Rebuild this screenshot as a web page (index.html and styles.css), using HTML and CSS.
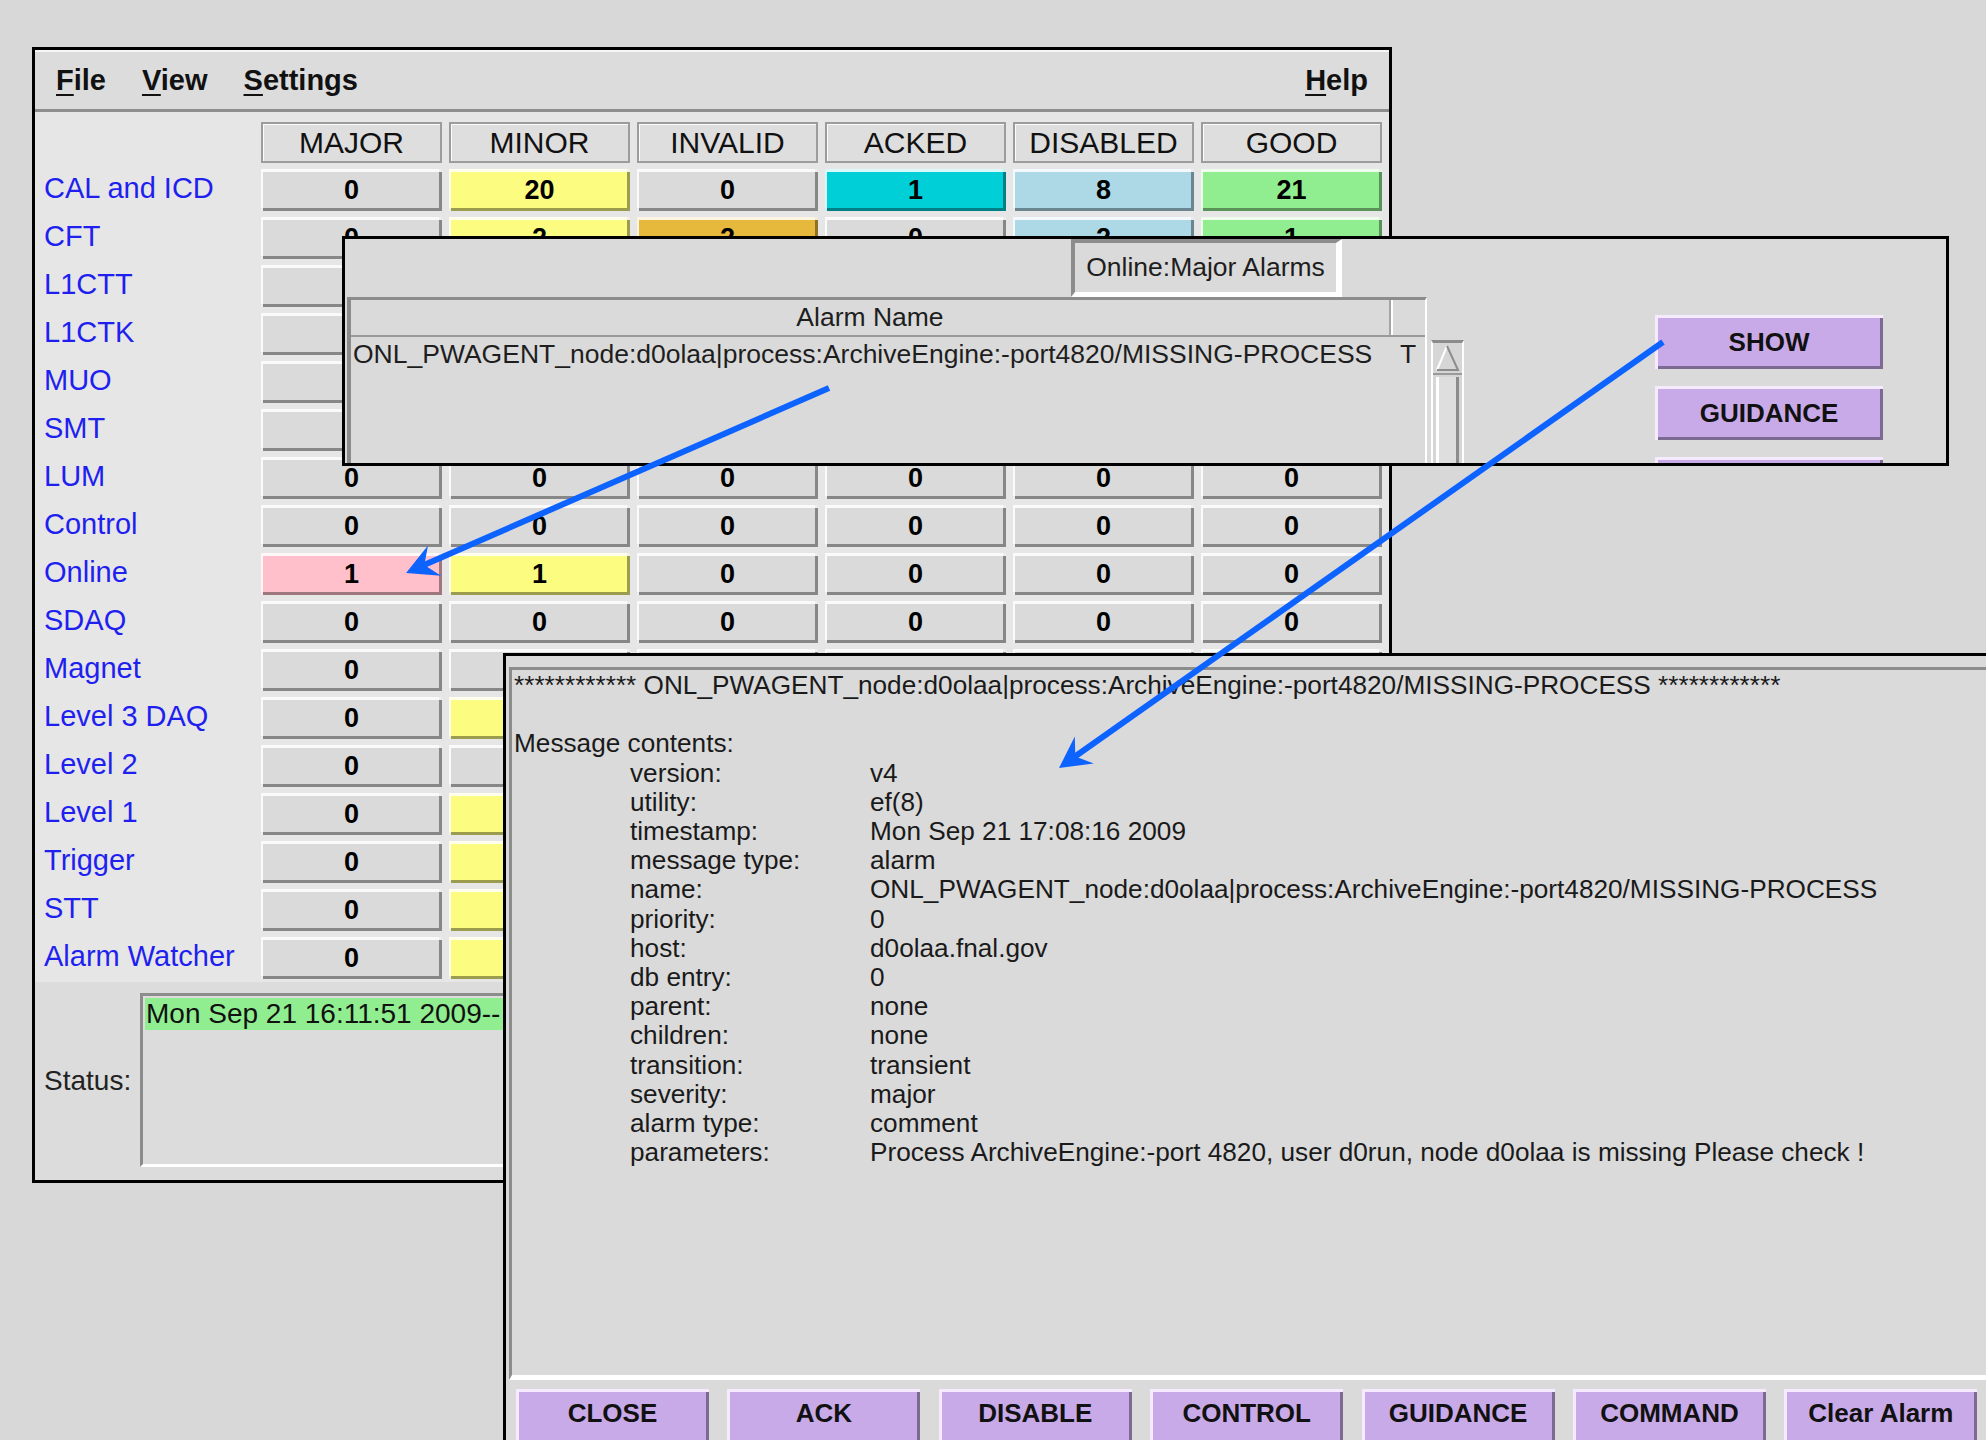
FILE: index.html
```html
<!DOCTYPE html>
<html lang="en">
<head>
<meta charset="utf-8">
<title>Alarm Display</title>
<link rel="stylesheet" href="styles.css">
</head>
<body>

<!-- Summary window -->
<div class="win win-main">
  <div class="menubar">
    <span class="menu"><u>F</u>ile</span>
    <span class="menu"><u>V</u>iew</span>
    <span class="menu"><u>S</u>ettings</span>
    <span class="menu menu-help"><u>H</u>elp</span>
  </div>

  <div class="grid">
    <div></div>
    <div class="hdr">MAJOR</div><div class="hdr">MINOR</div><div class="hdr">INVALID</div>
    <div class="hdr">ACKED</div><div class="hdr">DISABLED</div><div class="hdr">GOOD</div>

    <div class="lbl">CAL and ICD</div>
    <div class="cell">0</div><div class="cell c-yellow">20</div><div class="cell">0</div>
    <div class="cell c-cyan">1</div><div class="cell c-blue">8</div><div class="cell c-green">21</div>

    <div class="lbl">CFT</div>
    <div class="cell">0</div><div class="cell c-yellow">2</div><div class="cell c-orange">2</div>
    <div class="cell">0</div><div class="cell c-blue">2</div><div class="cell c-green">1</div>

    <div class="lbl">L1CTT</div>
    <div class="cell"></div><div class="cell"></div><div class="cell"></div>
    <div class="cell"></div><div class="cell"></div><div class="cell"></div>

    <div class="lbl">L1CTK</div>
    <div class="cell"></div><div class="cell"></div><div class="cell"></div>
    <div class="cell"></div><div class="cell"></div><div class="cell"></div>

    <div class="lbl">MUO</div>
    <div class="cell"></div><div class="cell"></div><div class="cell"></div>
    <div class="cell"></div><div class="cell"></div><div class="cell"></div>

    <div class="lbl">SMT</div>
    <div class="cell"></div><div class="cell"></div><div class="cell"></div>
    <div class="cell"></div><div class="cell"></div><div class="cell"></div>

    <div class="lbl">LUM</div>
    <div class="cell">0</div><div class="cell">0</div><div class="cell">0</div>
    <div class="cell">0</div><div class="cell">0</div><div class="cell">0</div>

    <div class="lbl">Control</div>
    <div class="cell">0</div><div class="cell">0</div><div class="cell">0</div>
    <div class="cell">0</div><div class="cell">0</div><div class="cell">0</div>

    <div class="lbl">Online</div>
    <div class="cell c-pink">1</div><div class="cell c-yellow">1</div><div class="cell">0</div>
    <div class="cell">0</div><div class="cell">0</div><div class="cell">0</div>

    <div class="lbl">SDAQ</div>
    <div class="cell">0</div><div class="cell">0</div><div class="cell">0</div>
    <div class="cell">0</div><div class="cell">0</div><div class="cell">0</div>

    <div class="lbl">Magnet</div>
    <div class="cell">0</div><div class="cell"></div><div class="cell"></div>
    <div class="cell"></div><div class="cell"></div><div class="cell"></div>

    <div class="lbl">Level 3 DAQ</div>
    <div class="cell">0</div><div class="cell c-yellow"></div><div class="cell"></div>
    <div class="cell"></div><div class="cell"></div><div class="cell"></div>

    <div class="lbl">Level 2</div>
    <div class="cell">0</div><div class="cell"></div><div class="cell"></div>
    <div class="cell"></div><div class="cell"></div><div class="cell"></div>

    <div class="lbl">Level 1</div>
    <div class="cell">0</div><div class="cell c-yellow"></div><div class="cell"></div>
    <div class="cell"></div><div class="cell"></div><div class="cell"></div>

    <div class="lbl">Trigger</div>
    <div class="cell">0</div><div class="cell c-yellow"></div><div class="cell"></div>
    <div class="cell"></div><div class="cell"></div><div class="cell"></div>

    <div class="lbl">STT</div>
    <div class="cell">0</div><div class="cell c-yellow"></div><div class="cell"></div>
    <div class="cell"></div><div class="cell"></div><div class="cell"></div>

    <div class="lbl">Alarm Watcher</div>
    <div class="cell">0</div><div class="cell c-yellow"></div><div class="cell"></div>
    <div class="cell"></div><div class="cell"></div><div class="cell"></div>
  </div>

  <div class="status">
    <span class="status-lbl">Status:</span>
    <div class="status-box">
      <div class="status-line">Mon Sep 21 16:11:51 2009--</div>
    </div>
  </div>
</div>

<!-- Alarm list window -->
<div class="win win-popup">
  <div class="pop-main">
    <div class="tab-row">
      <div class="tab">Online:Major Alarms</div>
    </div>
    <div class="table-row">
      <div class="alarm-table">
        <div class="thead">
          <div class="th-name">Alarm Name</div>
          <div class="th-t"></div>
        </div>
        <div class="trow">
          <div class="td-name">ONL_PWAGENT_node:d0olaa|process:ArchiveEngine:-port4820/MISSING-PROCESS</div>
          <div class="td-t">T</div>
        </div>
      </div>
      <div class="scrollbar">
        <svg class="sb-arrow" width="29" height="30" viewBox="0 0 29 30">
          <polyline points="4,27 14,3" fill="none" stroke="#ffffff" stroke-width="2"/>
          <polyline points="14,3 25,27 4,27" fill="none" stroke="#8c8c8c" stroke-width="2"/>
        </svg>
        <div class="sb-slider"></div>
      </div>
    </div>
  </div>
  <div class="pop-buttons">
    <div class="btn btn-pop">SHOW</div>
    <div class="btn btn-pop">GUIDANCE</div>
    <div class="btn btn-pop"></div>
  </div>
</div>

<!-- Alarm message window -->
<div class="win win-msg">
  <div class="msg-text">
    <div class="msg-line">************ ONL_PWAGENT_node:d0olaa|process:ArchiveEngine:-port4820/MISSING-PROCESS ************</div>
    <div class="msg-line">&nbsp;</div>
    <div class="msg-line">Message contents:</div>
    <div class="kv">
      <span>version:</span><span>v4</span>
      <span>utility:</span><span>ef(8)</span>
      <span>timestamp:</span><span>Mon Sep 21 17:08:16 2009</span>
      <span>message type:</span><span>alarm</span>
      <span>name:</span><span>ONL_PWAGENT_node:d0olaa|process:ArchiveEngine:-port4820/MISSING-PROCESS</span>
      <span>priority:</span><span>0</span>
      <span>host:</span><span>d0olaa.fnal.gov</span>
      <span>db entry:</span><span>0</span>
      <span>parent:</span><span>none</span>
      <span>children:</span><span>none</span>
      <span>transition:</span><span>transient</span>
      <span>severity:</span><span>major</span>
      <span>alarm type:</span><span>comment</span>
      <span>parameters:</span><span>Process ArchiveEngine:-port 4820, user d0run, node d0olaa is missing Please check !</span>
    </div>
  </div>
  <div class="msg-buttons">
    <div class="btn btn-msg">CLOSE</div>
    <div class="btn btn-msg">ACK</div>
    <div class="btn btn-msg">DISABLE</div>
    <div class="btn btn-msg">CONTROL</div>
    <div class="btn btn-msg">GUIDANCE</div>
    <div class="btn btn-msg">COMMAND</div>
    <div class="btn btn-msg">Clear Alarm</div>
  </div>
</div>

<!-- Annotation arrows -->
<svg class="arrows" width="1986" height="1440" viewBox="0 0 1986 1440">
  <line x1="829" y1="388" x2="424" y2="565" stroke="#0d63ff" stroke-width="6"/>
  <polygon points="406,573 428,545.5 424.3,565 441,575.7" fill="#0d63ff"/>
  <line x1="1663" y1="342" x2="1075" y2="756.5" stroke="#0d63ff" stroke-width="6"/>
  <polygon points="1059,768 1074.8,736.6 1075.3,756.5 1093.8,763.6" fill="#0d63ff"/>
</svg>

</body>
</html>
```

FILE: styles.css
```css
html, body {
  margin: 0;
  padding: 0;
}

body {
  width: 1986px;
  height: 1440px;
  overflow: hidden;
  position: relative;
  background: #d8d8d8;
  font-family: "Liberation Sans", Arial, sans-serif;
  color: #1a1a1a;
}

/* ---- generic window frame ---- */
.win {
  position: absolute;
  box-sizing: border-box;
  border: 3px solid #000;
}

/* ---- summary window ---- */
.win-main {
  left: 32px;
  top: 47px;
  width: 1360px;
  height: 1136px;
  background: #dcdcdc;
  display: flex;
  flex-direction: column;
}

.menubar {
  height: 62px;
  flex: none;
  box-sizing: border-box;
  border-top: 2px solid #f6f6f6;
  border-bottom: 3px solid #8e8e8e;
  display: flex;
  align-items: center;
  gap: 36px;
  padding: 0 21px;
  font-size: 29px;
  font-weight: bold;
  color: #111;
}

.menu u {
  text-decoration-thickness: 2px;
  text-underline-offset: 4px;
}

.menu-help {
  margin-left: auto;
}

.grid {
  display: grid;
  grid-template-columns: 210px repeat(6, 181px);
  grid-template-rows: 41px;
  grid-auto-rows: 42px;
  column-gap: 7px;
  row-gap: 6px;
  padding: 10px 0 3px 9px;
  background: #e6e6e6;
}

.hdr {
  box-sizing: border-box;
  border: 2px solid #9c9c9c;
  box-shadow: inset 1px 1px 0 #fafafa;
  background: #dedede;
  display: flex;
  align-items: center;
  justify-content: center;
  font-size: 30px;
  color: #111;
}

.lbl {
  display: flex;
  align-items: center;
  white-space: nowrap;
  font-size: 29px;
  color: #1f1ff0;
  padding-bottom: 3px;
}

.cell {
  background: #dadada;
  box-shadow: inset 2px 3px 0 rgba(255, 255, 255, 0.85),
              inset -3px -3px 0 rgba(0, 0, 0, 0.38);
  display: flex;
  align-items: center;
  justify-content: center;
  font-size: 27px;
  font-weight: bold;
  color: #000;
}

.c-yellow { background: #fcfc80; }
.c-orange { background: #e6b83c; }
.c-cyan   { background: #00cfd8; }
.c-blue   { background: #add8e6; }
.c-green  { background: #90ee90; }
.c-pink   { background: #ffc0cb; }

.status {
  flex: 1;
  display: flex;
  align-items: stretch;
}

.status-lbl {
  width: 105px;
  flex: none;
  box-sizing: border-box;
  padding-left: 9px;
  align-self: center;
  font-size: 28px;
  color: #222;
}

.status-box {
  flex: 1;
  margin: 11px 9px 13px 0;
  border-style: solid;
  border-width: 3px;
  border-color: #8c8c8c #ffffff #ffffff #8c8c8c;
  padding: 2px;
  overflow: hidden;
}

.status-line {
  height: 32px;
  line-height: 32px;
  padding-left: 1px;
  background: #90ee90;
  white-space: nowrap;
  font-size: 28px;
  color: #111;
}

/* ---- alarm list window ---- */
.win-popup {
  left: 342px;
  top: 236px;
  width: 1607px;
  height: 230px;
  background: #dadada;
  display: flex;
  overflow: hidden;
}

.pop-main {
  width: 1119px;
  flex: none;
  display: flex;
  flex-direction: column;
}

.tab-row {
  height: 58px;
  flex: none;
  display: flex;
}

.tab {
  margin-left: 726px;
  width: 271px;
  box-sizing: border-box;
  border-style: solid;
  border-width: 4px 6px 5px 4px;
  border-color: #8c8c8c #ffffff #ffffff #8c8c8c;
  display: flex;
  align-items: center;
  justify-content: center;
  font-size: 26.5px;
  color: #1e1e1e;
}

.table-row {
  flex: 1;
  display: flex;
}

.alarm-table {
  margin-left: 2px;
  width: 1080px;
  box-sizing: border-box;
  border-style: solid;
  border-width: 3px 2px 0 4px;
  border-color: #8c8c8c #ffffff #ffffff #8c8c8c;
}

.thead {
  display: flex;
  height: 37px;
  box-sizing: border-box;
  border-bottom: 2px solid #9a9a9a;
}

.th-name {
  width: 1038px;
  border-right: 2px solid #a4a4a4;
  display: flex;
  align-items: center;
  justify-content: center;
  font-size: 26.5px;
  color: #1e1e1e;
}

.th-t {
  flex: 1;
  box-shadow: inset 2px 0 0 #ffffff;
}

.trow {
  display: flex;
  height: 30px;
  margin-top: 2px;
  align-items: center;
  font-size: 26.5px;
  color: #1e1e1e;
}

.td-name {
  width: 1040px;
  box-sizing: border-box;
  padding-left: 2px;
  white-space: nowrap;
}

.td-t {
  flex: 1;
  text-align: center;
}

.scrollbar {
  margin: 43px 0 0 4px;
  width: 33px;
  box-sizing: border-box;
  border-style: solid;
  border-width: 3px 2px 0 2px;
  border-color: #8c8c8c #ffffff #ffffff #ffffff;
  background: #d6d6d6;
  display: flex;
  flex-direction: column;
}

.sb-arrow {
  display: block;
  flex: none;
  border-bottom: 2px solid #9a9a9a;
}

.sb-slider {
  flex: 1;
  margin: 2px 3px 0 3px;
  border-style: solid;
  border-width: 0 3px 0 3px;
  border-color: #ffffff #8c8c8c #ffffff #ffffff;
  background: #dedede;
}

.pop-buttons {
  display: flex;
  flex-direction: column;
  gap: 17px;
  margin-left: 191px;
  padding-top: 76px;
}

/* ---- lavender push buttons ---- */
.btn {
  box-sizing: border-box;
  background: #c9aae9;
  box-shadow: inset 3px 3px 0 #f6eaff,
              inset -3px -3px 0 #7d6a92;
  display: flex;
  justify-content: center;
  font-size: 26px;
  font-weight: bold;
  color: #111;
  white-space: nowrap;
}

.btn-pop {
  width: 228px;
  height: 54px;
  flex: none;
  align-items: center;
}

/* ---- alarm message window ---- */
.win-msg {
  left: 503px;
  top: 653px;
  width: 1600px;
  height: 900px;
  background: #dadada;
}

.msg-text {
  margin: 11px 0 0 3px;
  height: 713px;
  box-sizing: border-box;
  border-style: solid;
  border-width: 3px 0 5px 3px;
  border-color: #8c8c8c #ffffff #ffffff #8c8c8c;
  padding: 1px 0 0 2px;
  font-size: 26.2px;
  line-height: 29.2px;
  color: #1a1a1a;
  white-space: nowrap;
}

.kv {
  display: grid;
  grid-template-columns: 240px auto;
  padding-left: 116px;
}

.msg-buttons {
  display: flex;
  gap: 18.4px;
  margin: 9px 0 0 10px;
}

.btn-msg {
  width: 193px;
  height: 56px;
  flex: none;
  align-items: flex-start;
  padding-top: 9px;
  line-height: 30px;
}

/* ---- annotation arrows ---- */
.arrows {
  position: absolute;
  left: 0;
  top: 0;
  pointer-events: none;
}
```
